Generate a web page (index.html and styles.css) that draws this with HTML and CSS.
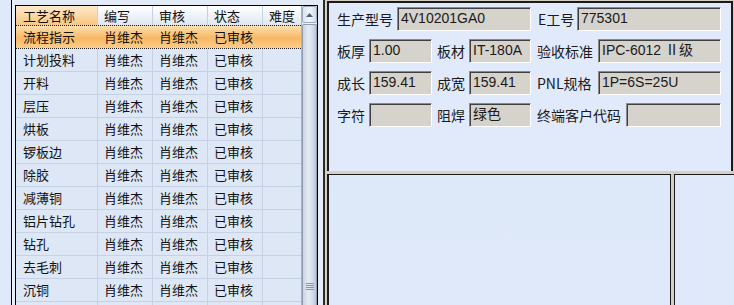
FILE: index.html
```html
<!DOCTYPE html>
<html lang="zh">
<head>
<meta charset="utf-8">
<title>工艺流程</title>
<link rel="stylesheet" href="styles.css">
</head>
<body>
<div class="app">
  <div class="strip"></div>
  <div class="gap"></div>
  <div class="gridwrap">
    <div class="grid">
      <div class="table">
        <div class="hrow">
          <div class="hc c1 active">工艺名称</div>
          <div class="hc c2">编写</div>
          <div class="hc c3">审核</div>
          <div class="hc c4">状态</div>
          <div class="hc c5">难度</div>
        </div>
        <div class="row sel"><div class="c c1">流程指示</div><div class="c c2">肖维杰</div><div class="c c3">肖维杰</div><div class="c c4">已审核</div><div class="c c5"></div></div>
        <div class="row"><div class="c c1">计划投料</div><div class="c c2">肖维杰</div><div class="c c3">肖维杰</div><div class="c c4">已审核</div><div class="c c5"></div></div>
        <div class="row"><div class="c c1">开料</div><div class="c c2">肖维杰</div><div class="c c3">肖维杰</div><div class="c c4">已审核</div><div class="c c5"></div></div>
        <div class="row"><div class="c c1">层压</div><div class="c c2">肖维杰</div><div class="c c3">肖维杰</div><div class="c c4">已审核</div><div class="c c5"></div></div>
        <div class="row"><div class="c c1">烘板</div><div class="c c2">肖维杰</div><div class="c c3">肖维杰</div><div class="c c4">已审核</div><div class="c c5"></div></div>
        <div class="row"><div class="c c1">锣板边</div><div class="c c2">肖维杰</div><div class="c c3">肖维杰</div><div class="c c4">已审核</div><div class="c c5"></div></div>
        <div class="row"><div class="c c1">除胶</div><div class="c c2">肖维杰</div><div class="c c3">肖维杰</div><div class="c c4">已审核</div><div class="c c5"></div></div>
        <div class="row"><div class="c c1">减薄铜</div><div class="c c2">肖维杰</div><div class="c c3">肖维杰</div><div class="c c4">已审核</div><div class="c c5"></div></div>
        <div class="row"><div class="c c1">铝片钻孔</div><div class="c c2">肖维杰</div><div class="c c3">肖维杰</div><div class="c c4">已审核</div><div class="c c5"></div></div>
        <div class="row"><div class="c c1">钻孔</div><div class="c c2">肖维杰</div><div class="c c3">肖维杰</div><div class="c c4">已审核</div><div class="c c5"></div></div>
        <div class="row"><div class="c c1">去毛刺</div><div class="c c2">肖维杰</div><div class="c c3">肖维杰</div><div class="c c4">已审核</div><div class="c c5"></div></div>
        <div class="row"><div class="c c1">沉铜</div><div class="c c2">肖维杰</div><div class="c c3">肖维杰</div><div class="c c4">已审核</div><div class="c c5"></div></div>
        <div class="row"><div class="c c1"></div><div class="c c2"></div><div class="c c3"></div><div class="c c4"></div><div class="c c5"></div></div>
      </div>
      <div class="vscroll">
        <div class="up"><svg width="7" height="4" viewBox="0 0 7 4"><path d="M0 4 L3.5 0 L7 4 Z" fill="#4d6185"/></svg></div>
        <div class="thumb"><div class="grip"></div></div>
      </div>
    </div>
  </div>
  <div class="split"></div>
  <div class="right">
    <div class="upper">
      <div class="frow">
        <span class="lbl w60">生产型号</span><span class="inp i134">4V10201GA0</span>
        <span class="sp7"></span><span class="lbl w39">E工号</span><span class="inp i144">775301</span>
      </div>
      <div class="frow">
        <span class="lbl w32">板厚</span><span class="inp i63">1.00</span>
        <span class="sp5"></span><span class="lbl w32">板材</span><span class="inp i62">IT-180A</span>
        <span class="sp6"></span><span class="lbl w61">验收标准</span><span class="inp i123">IPC-6012 Ⅱ级</span>
      </div>
      <div class="frow">
        <span class="lbl w32">成长</span><span class="inp i63">159.41</span>
        <span class="sp5"></span><span class="lbl w32">成宽</span><span class="inp i62">159.41</span>
        <span class="sp6"></span><span class="lbl w61">PNL规格</span><span class="inp i123">1P=6S=25U</span>
      </div>
      <div class="frow">
        <span class="lbl w32">字符</span><span class="inp i63"></span>
        <span class="sp5"></span><span class="lbl w32">阻焊</span><span class="inp i62">绿色</span>
        <span class="sp6"></span><span class="lbl w89">终端客户代码</span><span class="inp i95"></span>
      </div>
    </div>
    <div class="lower">
      <div class="lp1"></div>
      <div class="lp2"></div>
    </div>
  </div>
</div>
</body>
</html>
```

FILE: styles.css
```css
* { box-sizing: border-box; }
html, body { margin: 0; padding: 0; }
body {
  width: 734px;
  height: 305px;
  overflow: hidden;
  font-family: "Liberation Sans", "Noto Sans CJK SC", sans-serif;
  background: #e3ebf7;
}
.app {
  display: flex;
  width: 734px;
  height: 305px;
  overflow: hidden;
}
.strip {
  width: 12px;
  background: #dfe9f9;
  border-right: 1px solid #000;
}
.gap {
  width: 3px;
  background: #eaf0f8;
}
.gridwrap {
  width: 303px;
  margin-top: 5px;
  border-top: 1px solid #000;
  border-left: 1px solid #000;
  border-right: 1px solid #000;
  background: #dde7f6;
}
.grid {
  display: flex;
  height: 100%;
}
.table {
  width: 285px;
  overflow: hidden;
  font-family: "Noto Sans CJK SC", sans-serif;
  font-size: 13px;
  color: #111;
}
.hrow {
  display: flex;
  height: 20px;
  background: linear-gradient(#ffffff, #dfe7f3);
  border-bottom: 1px solid #b9c6d9;
}
.hc {
  line-height: 19px;
  padding-left: 6px;
  border-right: 1px solid #c6d1e0;
}
.hc.active {
  background: linear-gradient(#fde9cb, #f8c682);
}
.row {
  display: flex;
  height: 23px;
  border-bottom: 1px solid #c5d2e6;
  background: #dde7f6;
}
.row.sel {
  background: linear-gradient(#fddfb0 0%, #f8b863 55%, #fbcd8c 100%);
  border-top: 1px dotted #222;
  border-bottom: 1px dotted #222;
  margin-top: -1px;
  height: 24px;
}
.c {
  line-height: 22px;
  padding-left: 6px;
  border-right: 1px solid #c5d2e6;
  white-space: nowrap;
  overflow: hidden;
}
.row.sel .c { border-right-color: transparent; }
.c1 { width: 82px; padding-left: 7px; }
.c2 { width: 55px; }
.c3 { width: 55px; }
.c4 { width: 55px; }
.c5 { width: 38px; border-right: none; }
.vscroll {
  width: 16px;
  display: flex;
  flex-direction: column;
  background: linear-gradient(90deg, #e3e8ef, #f4f6f9 50%, #e3e8ef);
  border-left: 1px solid #a8b4c6;
}
.up {
  height: 17px;
  display: flex;
  align-items: center;
  justify-content: center;
  background: linear-gradient(90deg, #dbe3ee, #f3f6fa 50%, #d3dce9);
  border: 1px solid #9eabbf;
  border-radius: 2px;
}
.thumb {
  flex: 1;
  margin-top: 1px;
  background: linear-gradient(90deg, #c9d3e1, #e6ebf2 40%, #d9e0ea 70%, #b9c5d6);
  border: 1px solid #8f9db3;
  border-bottom: none;
  border-radius: 2px 2px 0 0;
  display: flex;
  justify-content: center;
  padding-top: 258px;
}
.grip {
  width: 8px;
  height: 7px;
  background: repeating-linear-gradient(#8a97aa 0 1px, transparent 1px 2px);
}
.split {
  width: 5px;
  background: #e6ecf5;
}
.right {
  flex: 1;
  display: flex;
  flex-direction: column;
  border-left: 2px solid #2a2a2a;
  background: #d4d0c8;
  padding-left: 2px;
}
.upper {
  height: 170px;
  margin-top: 1px;
  margin-right: 1px;
  border-top: 2px solid #1a1a1a;
  border-left: 2px solid #1a1a1a;
  border-right: 2px solid #1a1a1a;
  background: #e0eafa;
  padding: 4px 0 0 8px;
  display: flex;
  flex-direction: column;
  gap: 8px;
}
.frow {
  display: flex;
  height: 24px;
  font-size: 14px;
  color: #1a1a1a;
}
.lbl {
  line-height: 24px;
  font-family: "Noto Sans CJK SC", sans-serif;
  white-space: nowrap;
  letter-spacing: 0;
}
.inp {
  height: 24px;
  line-height: 21px;
  padding-left: 3px;
  background: #d6d2cc;
  border-top: 1px solid #8a8a8a;
  border-left: 1px solid #8a8a8a;
  border-right: 1px solid #ffffff;
  border-bottom: 1px solid #ffffff;
  box-shadow: inset 1px 1px 0 #404040;
  white-space: nowrap;
  overflow: hidden;
  font-family: "Liberation Sans", "Noto Sans CJK SC", sans-serif;
}
.w60 { width: 60px; }
.w39 { width: 39px; }
.w32 { width: 32px; }
.w61 { width: 61px; }
.w89 { width: 89px; }
.i134 { width: 134px; }
.i144 { width: 144px; }
.i63 { width: 63px; }
.i62 { width: 62px; }
.i123 { width: 123px; }
.i95 { width: 95px; }
.sp7 { width: 7px; }
.sp6 { width: 6px; }
.sp5 { width: 5px; }
.lower {
  flex: 1;
  margin-top: 3px;
  display: flex;
  gap: 3px;
}
.lp1 {
  width: 344px;
  border-top: 1px solid #1a1a1a;
  border-left: 2px solid #1a1a1a;
  border-right: 1px solid #1a1a1a;
  background: linear-gradient(#dde8f8, #dfe9fa);
}
.lp2 {
  flex: 1;
  border-top: 1px solid #1a1a1a;
  border-left: 1px solid #1a1a1a;
  background: #dfe9fa;
}
```
